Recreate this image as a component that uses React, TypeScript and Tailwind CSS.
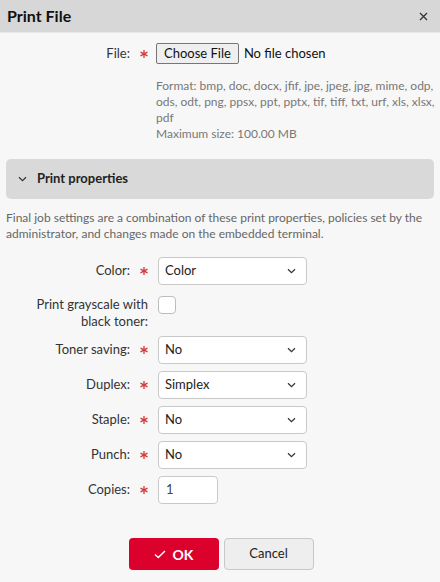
import React from "react";

const font = { fontFamily: "'Segoe UI', Lato, 'Liberation Sans', sans-serif" };

function Req() {
  return (
    <svg width="8" height="8" viewBox="0 0 8 8" className="ml-[10px] shrink-0">
      <g stroke="#d33a3a" strokeWidth="1.35" strokeLinecap="round">
        <line x1="4" y1="0.6" x2="4" y2="7.4" />
        <line x1="1" y1="2.3" x2="7" y2="5.7" />
        <line x1="1" y1="5.7" x2="7" y2="2.3" />
      </g>
    </svg>
  );
}

function Chevron() {
  return (
    <svg width="9" height="6" viewBox="0 0 9 6" className="absolute right-[10px] top-1/2 -translate-y-1/2">
      <path d="M1 1.2 L4.5 4.6 L8 1.2" fill="none" stroke="#333" strokeWidth="1.2" />
    </svg>
  );
}

function Field({ label, children, required = true }: { label: string; children: React.ReactNode; required?: boolean }) {
  return (
    <div className="flex items-center mb-[7px]">
      <div className="w-[142px] shrink-0 flex items-center justify-end text-[13px] text-[#333]">
        <span>{label}</span>
        {required && <Req />}
      </div>
      <div className="ml-[10px]">{children}</div>
    </div>
  );
}

function Select({ value }: { value: string }) {
  return (
    <div className="relative w-[149px] h-[28px] bg-white border border-[#c9c9c9] rounded-[4px] flex items-center pl-[6px] text-[13px] text-[#222]">
      {value}
      <Chevron />
    </div>
  );
}

export default function App() {
  return (
    <div style={font} className="w-[440px] h-[582px] bg-[#f7f7f7] flex flex-col overflow-hidden">
      {/* header */}
      <div className="h-[33px] bg-[#d7d7d7] border-b border-[#e9e9e9] flex items-center justify-between px-[7px] shrink-0">
        <span className="text-[16px] font-bold text-[#111]">Print File</span>
        <svg width="9" height="9" viewBox="0 0 9 9" className="mr-[5px]">
          <path d="M1 1 L8 8 M8 1 L1 8" stroke="#333" strokeWidth="1.3" />
        </svg>
      </div>

      <div className="px-[6px]">
        {/* file */}
        <div className="flex items-center mt-[10px]">
          <div className="w-[142px] shrink-0 flex items-center justify-end text-[13px] text-[#333]">
            <span>File:</span>
            <Req />
          </div>
          <div className="ml-[8px] flex items-center text-[13px] text-[#111]">
            <div className="h-[21px] px-[7px] flex items-center bg-[#efefef] border border-[#767676] rounded-[2px]">Choose File</div>
            <span className="ml-[5px]">No file chosen</span>
          </div>
        </div>
        <div className="ml-[150px] w-[286px] mt-[14px] text-[12px] leading-[16px] text-[#777]">
          <p>Format: bmp, doc, docx, jfif, jpe, jpeg, jpg, mime, odp, ods, odt, png, ppsx, ppt, pptx, tif, tiff, txt, urf, xls, xlsx, pdf</p>
          <p>Maximum size: 100.00 MB</p>
        </div>

        {/* section */}
        <div className="mt-[17px] h-[40px] bg-[#d9d9d9] rounded-[5px] flex items-center pl-[12px]">
          <svg width="9" height="6" viewBox="0 0 9 6">
            <path d="M1 1.2 L4.5 4.6 L8 1.2" fill="none" stroke="#333" strokeWidth="1.2" />
          </svg>
          <span className="ml-[10px] text-[13px] font-bold text-[#222]">Print properties</span>
        </div>

        <p className="mt-[11px] text-[12px] leading-[16px] text-[#666]">
          Final job settings are a combination of these print properties, policies set by the administrator, and changes made on the embedded terminal.
        </p>

        <div className="mt-[15px]">
          <Field label="Color:">
            <Select value="Color" />
          </Field>
          <div className="flex items-start mb-[6px] pt-[4px]">
            <div className="w-[142px] shrink-0 pl-[24px] text-right text-[13px] leading-[17px] text-[#333]">
              Print grayscale with black toner:
            </div>
            <div className="ml-[10px] w-[18px] h-[18px] bg-white border border-[#bdbdbd] rounded-[4px]" />
          </div>
          <Field label="Toner saving:">
            <Select value="No" />
          </Field>
          <Field label="Duplex:">
            <Select value="Simplex" />
          </Field>
          <Field label="Staple:">
            <Select value="No" />
          </Field>
          <Field label="Punch:">
            <Select value="No" />
          </Field>
          <Field label="Copies:">
            <div className="w-[60px] h-[28px] bg-white border border-[#c9c9c9] rounded-[4px] flex items-center pl-[7px] text-[13px] text-[#444]">1</div>
          </Field>
        </div>

        <div className="mt-[34px] flex justify-center gap-[5px] pl-[2px]">
          <button className="w-[90px] h-[32px] bg-[#dc002d] rounded-[4px] flex items-center justify-center gap-[7px] text-white">
            <svg width="12" height="9" viewBox="0 0 12 9">
              <path d="M1 4.5 L4.3 7.6 L11 1" fill="none" stroke="white" strokeWidth="1.4" />
            </svg>
            <span className="text-[14px] font-bold">OK</span>
          </button>
          <button className="w-[90px] h-[32px] bg-[#eeeeee] border border-[#c8c8c8] rounded-[4px] text-[13px] text-[#222]">
            Cancel
          </button>
        </div>
      </div>
    </div>
  );
}
